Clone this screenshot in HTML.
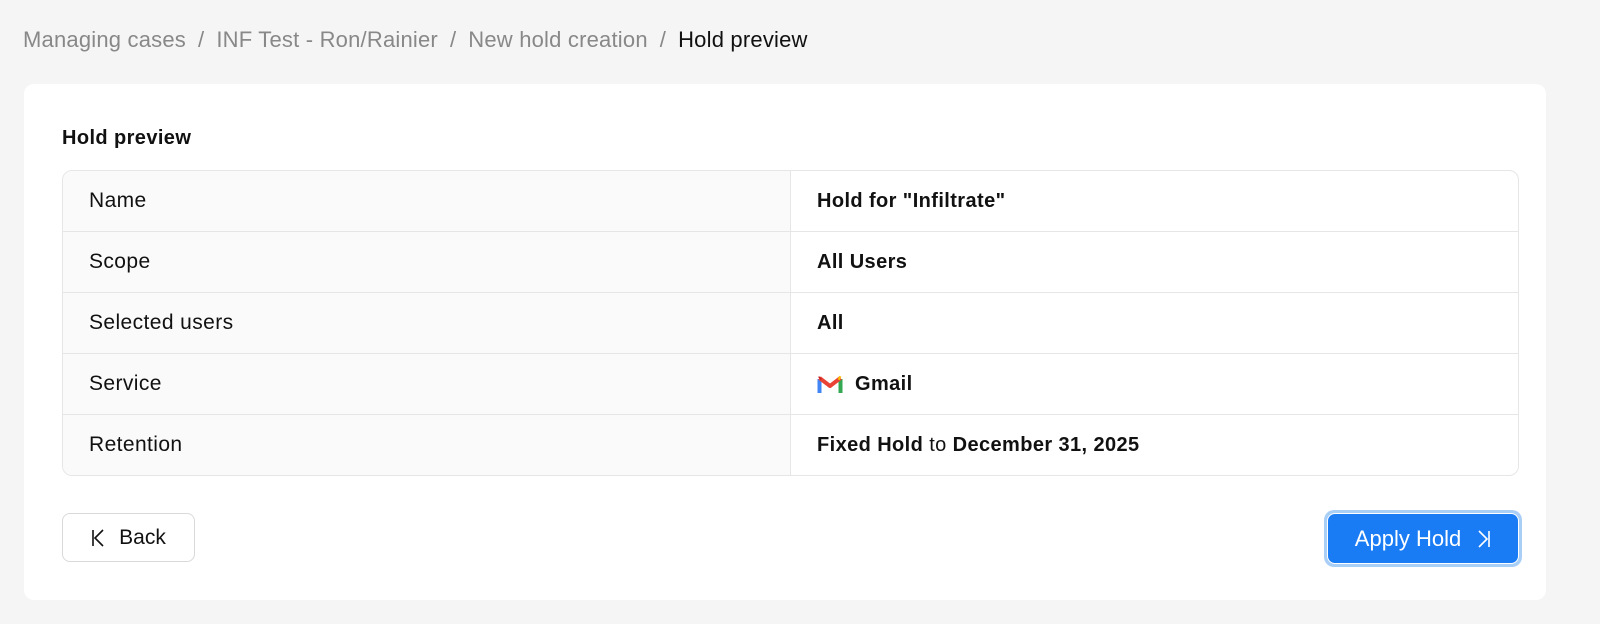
<!DOCTYPE html>
<html><head><style>
body{margin:0;background:#f5f5f5;font-family:"Liberation Sans",sans-serif;width:1600px;height:624px;overflow:hidden;position:relative}
.bc{position:absolute;left:23px;top:27px;font-size:22px;letter-spacing:0.2px;color:#888;white-space:nowrap}
.bc span.s{margin:0 12px}
.bc b{font-weight:normal;color:#111}
.card{position:absolute;left:24px;top:84px;width:1522px;height:516px;background:#fff;border-radius:10px}
.title{position:absolute;left:62px;top:127px;font-size:20px;letter-spacing:0.4px;font-weight:bold;color:#111}
table{position:absolute;left:62px;top:170px;width:1457px;border-collapse:separate;border-spacing:0;border:1px solid #e6e6e6;border-radius:10px;overflow:hidden;font-size:20px;color:#111}
td{height:60px;padding:0;border-bottom:1px solid #e6e6e6}
tr:last-child td{border-bottom:none}
td.k{width:701px;background:#fafafa;padding-left:26px;border-right:1px solid #e6e6e6;font-size:21px;letter-spacing:0.4px}
td.v{padding-left:26px;font-weight:bold;letter-spacing:0.4px}
.back{position:absolute;left:62px;top:513px;width:133px;height:49px;border:1px solid #d9d9d9;border-radius:8px;box-sizing:border-box;font-size:21px;color:#111;display:flex;align-items:center;justify-content:center;gap:14px}
.apply{position:absolute;left:1324px;top:510px;width:198px;height:57px;border-radius:10px;background:#a9cff7;padding:3px;box-sizing:border-box}
.apply div{width:100%;height:100%;background:#1a7cf5;border-radius:8px;border:1px solid #fff;box-sizing:border-box;color:#fff;font-size:22px;display:flex;align-items:center;justify-content:center;gap:16px}
</style></head><body>
<div class="bc">Managing cases<span class="s">/</span>INF Test - Ron/Rainier<span class="s">/</span>New hold creation<span class="s">/</span><b>Hold preview</b></div>
<div class="card"></div>
<div class="title">Hold preview</div>
<table>
<tr><td class="k">Name</td><td class="v">Hold for "Infiltrate"</td></tr>
<tr><td class="k">Scope</td><td class="v">All Users</td></tr>
<tr><td class="k">Selected users</td><td class="v">All</td></tr>
<tr><td class="k">Service</td><td class="v"><div style="display:flex;align-items:center;gap:12px"><svg width="26" height="20" viewBox="0 0 26 20"><path d="M2.5 19V5" stroke="#4285f4" stroke-width="4" fill="none"/><path d="M23.5 19V5" stroke="#34a853" stroke-width="4" fill="none"/><path d="M2.5 4l10.5 8 10.5-8" stroke="#ea4335" stroke-width="4" fill="none" stroke-linejoin="round"/><path d="M21.5 3.5l2 1" stroke="#fbbc04" stroke-width="4"/><path d="M2.5 4.5l1-1" stroke="#c5221f" stroke-width="4"/></svg>Gmail</div></td></tr>
<tr><td class="k">Retention</td><td class="v">Fixed Hold <span style="font-weight:normal">to</span> December 31, 2025</td></tr>
</table>
<div class="back"><svg width="14" height="18" viewBox="0 0 14 18"><path d="M2 1v16M12 1L4 9l8 8" stroke="#111" stroke-width="1.6" fill="none"/></svg>Back</div>
<div class="apply"><div>Apply Hold<svg width="14" height="18" viewBox="0 0 14 18"><path d="M12 1v16M2 1l8 8-8 8" stroke="#fff" stroke-width="1.6" fill="none"/></svg></div></div>
</body></html>
